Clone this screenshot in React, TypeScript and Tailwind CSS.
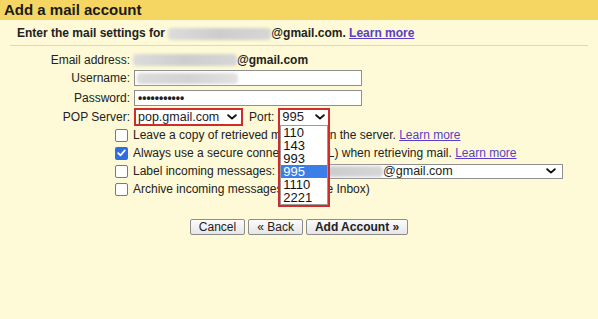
function Chevron() {
  return (
    <svg width="10" height="6" viewBox="0 0 10 6" className="shrink-0">
      <path d="M1.2 1.2L5 4.6L8.8 1.2" fill="none" stroke="#111" strokeWidth="1.9" strokeLinecap="round" strokeLinejoin="round" />
    </svg>
  );
}

function Blur({ w, h }: { w: string; h: string }) {
  return (
    <span className={`inline-block align-middle ${w} ${h} rounded-sm bg-gradient-to-r from-[#dcdcdc] via-[#cdcdcd] to-[#d6d6d6] blur-[1.5px]`} />
  );
}

function Box({ checked }: { checked?: boolean }) {
  if (checked) {
    return (
      <span className="flex w-[13px] h-[13px] items-center justify-center rounded-[2px] bg-[#2f6ee0]">
        <svg width="9" height="8" viewBox="0 0 9 8">
          <path d="M1.2 4.2L3.5 6.4L7.8 1.4" fill="none" stroke="#fff" strokeWidth="1.7" strokeLinecap="round" strokeLinejoin="round" />
        </svg>
      </span>
    );
  }
  return <span className="block w-[13px] h-[13px] rounded-[2px] border border-[#7a7a7a] bg-white" />;
}

function Learn() {
  return <a className="text-[#5a3ec6] underline underline-offset-1 cursor-pointer">Learn more</a>;
}

const ports = ["110", "143", "993", "995", "1110", "2221"];

export default function App() {
  return (
    <div className="w-[598px] h-[319px] overflow-hidden bg-[#fef9d6] font-['Liberation_Sans',Arial,sans-serif] text-[12px] leading-[14px] text-[#222]">
      <div className="h-[20px] bg-[#f6d662] pl-[4px] text-[15px] font-bold leading-[20px] text-[#1a1a1a]">Add a mail account</div>

      <div className="mx-[10px] h-[26px] border-b border-[#e7dc92] pl-[7px] pt-[6px] font-bold">
        Enter the mail settings for <Blur w="w-[103px]" h="h-[12px]" />@gmail.com. <Learn />
      </div>

      <div className="mt-[5px] flex h-[18px] items-center">
        <span className="w-[130px] text-right">Email address:</span>
        <span className="ml-[3px] flex items-center font-bold">
          <Blur w="w-[104px]" h="h-[12px]" />@gmail.com
        </span>
      </div>

      <div className="flex h-[18px] items-center">
        <span className="w-[130px] text-right">Username:</span>
        <div className="ml-[4px] flex h-[16px] w-[228px] items-center border border-[#8f8f8f] bg-white pl-[2px]">
          <span className="block h-[11px] w-[101px] rounded-sm bg-gradient-to-r from-[#dcdcdc] via-[#d3d3d3] to-[#e2e2e2] blur-[1.5px]" />
        </div>
      </div>

      <div className="mt-[2px] flex h-[18px] items-center">
        <span className="w-[130px] text-right">Password:</span>
        <div className="ml-[4px] flex h-[16px] w-[228px] items-center border border-[#8f8f8f] bg-white pl-[3px] text-[12px] font-bold leading-[12px]">
          •••••••••••
        </div>
      </div>

      <div className="flex h-[19px] items-center">
        <span className="w-[130px] text-right">POP Server:</span>
        <div className="ml-[4px] flex h-[18px] w-[109px] items-center justify-between border-2 border-[#d12c2c] bg-white pl-[2px] pr-[4px] text-[12.5px]">
          pop.gmail.com <Chevron />
        </div>
        <span className="ml-[6px]">Port:</span>
        <div className="relative ml-[4px] h-[18px] w-[52px] border-2 border-b-0 border-[#d12c2c]">
          <div className="flex h-full items-center justify-between border-b border-[#9a9a9a] bg-white pl-[2px] pr-[3px] text-[13px]">
            995 <Chevron />
          </div>
          <div className="absolute left-[-2px] top-full z-10 w-[52px] border-2 border-t-0 border-[#d12c2c] bg-white">
            <div className="border border-t-0 border-[#9a9a9a]">
              {ports.map((p) => (
                <div
                  key={p}
                  className={`h-[13px] pl-[2px] text-[13px] leading-[13px] ${p === "995" ? "bg-[#3b7fe6] text-white" : "text-[#111]"}`}
                >
                  {p}
                </div>
              ))}
            </div>
          </div>
        </div>
      </div>

      <div className="ml-[115px]">
        <div className="flex h-[18px] items-center gap-[5px]">
          <Box />
          <span>Leave a copy of retrieved message on the server. <Learn /></span>
        </div>
        <div className="flex h-[18px] items-center gap-[5px]">
          <Box checked />
          <span>Always use a secure connection (SSL) when retrieving mail. <Learn /></span>
        </div>
        <div className="flex h-[18px] items-center gap-[5px]">
          <Box />
          <span>Label incoming messages:</span>
          <div className="ml-[-1px] flex h-[15px] w-[284px] items-center justify-between border border-[#8f8f8f] bg-white pl-[3px] pr-[6px] text-[12.5px]">
            <span className="flex items-center">
              <Blur w="w-[100px]" h="h-[11px]" />@gmail.com
            </span>
            <Chevron />
          </div>
        </div>
        <div className="flex h-[18px] items-center gap-[5px]">
          <Box />
          <span>Archive incoming messages (Skip the Inbox)</span>
        </div>
      </div>

      <div className="mt-[21px] flex justify-center gap-[3px]">
        {["Cancel", "« Back", "Add Account »"].map((b) => (
          <button
            key={b}
            className={`h-[16px] rounded-[2px] border border-[#8c8c8c] bg-gradient-to-b from-[#fbfbfb] to-[#e6e6e6] px-[8px] text-[12px] leading-[13px] text-[#222] ${b === "Add Account »" ? "font-bold" : ""}`}
          >
            {b}
          </button>
        ))}
      </div>
    </div>
  );
}
